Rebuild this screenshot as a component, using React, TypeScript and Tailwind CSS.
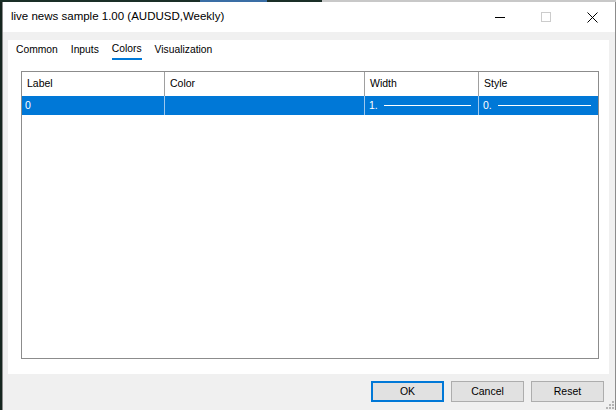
import React from 'react';

const ui = "font-['Liberation_Sans',Arial,sans-serif]";

const HeaderCell: React.FC<{ label: string; className?: string }> = ({ label, className }) => (
  <div className={`h-full flex items-center pl-[5px] border-r border-[#a0a0a0] ${className ?? ''}`}>
    <span>{label}</span>
  </div>
);

// row value with the sample line drawn after it
const LineCell: React.FC<{ value: string; className?: string }> = ({ value, className }) => (
  <div className={`h-full flex items-center pl-[4px] pr-[7px] gap-[6px] border-r border-[#9cc7ee] ${className ?? ''}`}>
    <span>{value}</span>
    <div className="flex-1 h-px bg-white" />
  </div>
);

export default function App() {
  return (
    <div className={`w-[616px] h-[410px] bg-[#1b2a24] flex flex-col overflow-hidden text-[10.5px] text-black ${ui}`}>
      {/* chart behind the dialog */}
      <div className="h-[2px] flex shrink-0">
        <div className="w-[200px] bg-[#1a2f27]" />
        <div className="w-[67px] bg-[#3a6ea5]" />
        <div className="w-[55px] bg-[#1a2f27]" />
        <div className="flex-1 bg-[#c8c8c8]" />
      </div>

      <div className="flex-1 flex min-h-0">
        <div className="w-[2px] bg-[#16261f] shrink-0" />

        {/* dialog window */}
        <div className="flex-1 flex flex-col bg-[#f0f0f0] border-l border-r border-[#8c8c8c] min-w-0">
          {/* title bar */}
          <div className="h-[30px] bg-white flex items-center shrink-0">
            <span className="pl-[8px] text-[11.5px] flex-1 whitespace-nowrap">live news sample 1.00 (AUDUSD,Weekly)</span>
            <div className="w-[46px] h-full flex items-center justify-center">
              <div className="w-[10px] h-px bg-black" />
            </div>
            <div className="w-[46px] h-full flex items-center justify-center">
              <div className="w-[10px] h-[10px] border border-[#cccccc]" />
            </div>
            <div className="w-[46px] h-full flex items-center justify-center">
              <svg width="11" height="11" viewBox="0 0 11 11" fill="none" stroke="#000" strokeWidth="1">
                <path d="M0.5 0.5 L10.5 10.5 M10.5 0.5 L0.5 10.5" />
              </svg>
            </div>
          </div>

          {/* tab panel */}
          <div className="mt-[8px] ml-[5px] mr-[6px] h-[334px] bg-white flex flex-col shrink-0">
            <div className="h-[20px] flex items-end pl-[8px] gap-[13px] text-[10.3px]">
              <div className="h-full flex items-center">Common</div>
              <div className="h-full flex items-center">Inputs</div>
              <div className="h-full flex items-center border-b-2 border-[#0078d7]">Colors</div>
              <div className="h-full flex items-center">Visualization</div>
            </div>

            <div className="mt-[11px] ml-[13px] mr-[10px] h-[288px] border border-[#8c8c8c] flex flex-col">
              <div className="h-[24px] flex">
                <HeaderCell label="Label" className="w-[143px]" />
                <HeaderCell label="Color" className="w-[200px]" />
                <HeaderCell label="Width" className="w-[114px]" />
                <div className="h-full flex items-center pl-[5px] flex-1">Style</div>
              </div>
              <div className="h-[19px] flex bg-[#0078d7] text-white">
                <div className="w-[143px] h-full flex items-center pl-[3px] border-r border-[#9cc7ee]">0</div>
                <div className="w-[200px] h-full border-r border-[#9cc7ee]" />
                <LineCell value="1." className="w-[114px]" />
                <LineCell value="0." className="flex-1 border-r-0" />
              </div>
            </div>
          </div>

          {/* buttons */}
          <div className="flex-1 flex items-start justify-end gap-[7px] pt-[7px] pr-[11px] relative">
            <button className="w-[73px] h-[21px] bg-[#e1e1e1] border-2 border-[#0078d7] flex items-center justify-center">OK</button>
            <button className="w-[73px] h-[21px] bg-[#e1e1e1] border border-[#adadad] flex items-center justify-center">Cancel</button>
            <button className="w-[73px] h-[21px] bg-[#e1e1e1] border border-[#adadad] flex items-center justify-center">Reset</button>
            {/* size grip */}
            <svg className="absolute right-[1px] bottom-[1px]" width="8" height="8" viewBox="0 0 8 8" fill="#b4b4b4">
              <rect x="6" y="0" width="2" height="2" />
              <rect x="3" y="3" width="2" height="2" />
              <rect x="6" y="3" width="2" height="2" />
              <rect x="0" y="6" width="2" height="2" />
              <rect x="3" y="6" width="2" height="2" />
              <rect x="6" y="6" width="2" height="2" />
            </svg>
          </div>
        </div>
      </div>
    </div>
  );
}
